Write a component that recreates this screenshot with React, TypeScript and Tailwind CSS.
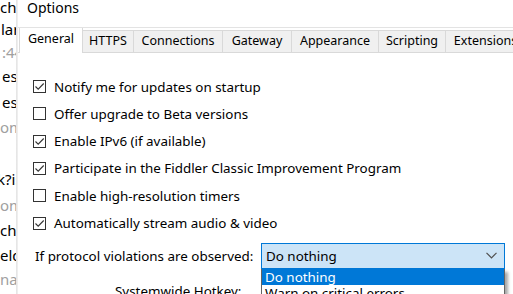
import React from "react";

const strip: { t: string; gray?: boolean; h: string; pl: string }[] = [
  { t: "ch", h: "h-[22px]", pl: "pl-0" },
  { t: "lar", h: "h-[23px]", pl: "pl-[1px]" },
  { t: ":44", gray: true, h: "h-[24px]", pl: "pl-[2px]" },
  { t: "es", h: "h-[26px]", pl: "pl-[2px]" },
  { t: "es", h: "h-[25px]", pl: "pl-[2px]" },
  { t: "om", gray: true, h: "h-[26px]", pl: "pl-0" },
  { t: "", h: "h-[26px]", pl: "pl-0" },
  { t: "k?is", h: "h-[26px]", pl: "-ml-[3px]" },
  { t: "om", gray: true, h: "h-[25px]", pl: "pl-0" },
  { t: "cha", h: "h-[25px]", pl: "pl-0" },
  { t: "eld", h: "h-[24px]", pl: "pl-0" },
  { t: "nar", gray: true, h: "h-[24px]", pl: "pl-0" },
];

const tabs: { t: string; w: string }[] = [
  { t: "HTTPS", w: "w-[51px]" },
  { t: "Connections", w: "w-[89px]" },
  { t: "Gateway", w: "w-[69px]" },
  { t: "Appearance", w: "w-[87px]" },
  { t: "Scripting", w: "w-[67px]" },
  { t: "Extensions", w: "w-[80px]" },
];

const checks: { t: string; c: boolean }[] = [
  { t: "Notify me for updates on startup", c: true },
  { t: "Offer upgrade to Beta versions", c: false },
  { t: "Enable IPv6 (if available)", c: true },
  { t: "Participate in the Fiddler Classic Improvement Program", c: true },
  { t: "Enable high-resolution timers", c: false },
  { t: "Automatically stream audio & video", c: true },
];

function Box({ checked }: { checked: boolean }) {
  return (
    <div className="w-[13px] h-[13px] border border-[#333333] bg-white shrink-0 flex items-center justify-center">
      {checked && (
        <svg width="11" height="11" viewBox="0 0 11 11">
          <path d="M1.5 5.5 L4.2 8.2 L9.7 2.5" fill="none" stroke="#333333" strokeWidth="1.1" />
        </svg>
      )}
    </div>
  );
}

export default function App() {
  return (
    <div
      className="w-[513px] h-[294px] overflow-hidden bg-white flex text-black"
      style={{ fontFamily: '"Noto Sans", sans-serif' }}
    >
      <div className="w-[16px] shrink-0 overflow-hidden flex flex-col -mt-[5px] text-[15px]">
        {strip.map((l, i) => (
          <div
            key={i}
            className={`${l.h} ${l.pl} shrink-0 whitespace-nowrap leading-[24px] ${l.gray ? "text-[#a0a0a0]" : "text-black"}`}
          >
            {l.t}
          </div>
        ))}
      </div>
      <div className="w-[2px] shrink-0 bg-gradient-to-r from-[#e2e2e2] to-[#f2f2f2]" />
      <div className="flex-1 min-w-0 flex flex-col relative">
        <div className="h-[28px] shrink-0 border-b border-[#e3e3e3] pl-[9px] text-[14px] leading-[16px]">
          Options
        </div>
        <div className="h-[25px] shrink-0 flex items-end border-b border-[#d9d9d9] pl-[1px] text-[12.5px]">
          <div className="h-[25px] -mb-px w-[64px] shrink-0 bg-white border-x border-[#d9d9d9] flex items-center justify-center pb-[3px]">
            General
          </div>
          {tabs.map((t) => (
            <div
              key={t.t}
              className={`${t.w} h-[22px] shrink-0 bg-[#f0f0f0] border-t border-r border-[#d9d9d9] flex items-center justify-center whitespace-nowrap`}
            >
              {t.t}
            </div>
          ))}
        </div>
        <div className="flex flex-col pt-[20px] pl-[15px] text-[13.4px]">
          {checks.map((c) => (
            <div key={c.t} className="h-[27.3px] flex items-center gap-[8px] whitespace-nowrap">
              <Box checked={c.c} />
              <span>{c.t}</span>
            </div>
          ))}
        </div>
        <div className="flex items-center mt-[6px] pl-[17px] text-[13.4px]">
          <div className="w-[226px] shrink-0 whitespace-nowrap">If protocol violations are observed:</div>
          <div className="relative w-[244px] h-[26px] shrink-0">
            <div className="h-full border border-[#0078d7] bg-[#cce4f7] flex items-center justify-between pl-[4px] pr-[7px]">
              <span>Do nothing</span>
              <svg width="11" height="7" viewBox="0 0 11 7">
                <path d="M0.5 0.8 L5.5 5.8 L10.5 0.8" fill="none" stroke="#505050" strokeWidth="1.2" />
              </svg>
            </div>
            <div className="absolute left-0 top-[26px] w-[244px] bg-white border border-t-0 border-[#646464] shadow-[3px_3px_3px_rgba(0,0,0,0.35)] z-10">
              <div className="h-[16px] bg-[#0078d7] text-white pl-[3px] leading-[16px]">Do nothing</div>
              <div className="h-[16px] pl-[3px] leading-[16px]">Warn on critical errors</div>
              <div className="h-[16px] pl-[3px] leading-[16px]">Fail on critical errors</div>
            </div>
          </div>
        </div>
        <div className="mt-[14px] pl-[97px] text-[13.4px] whitespace-nowrap leading-[16px]">
          Systemwide Hotkey:
        </div>
      </div>
    </div>
  );
}
